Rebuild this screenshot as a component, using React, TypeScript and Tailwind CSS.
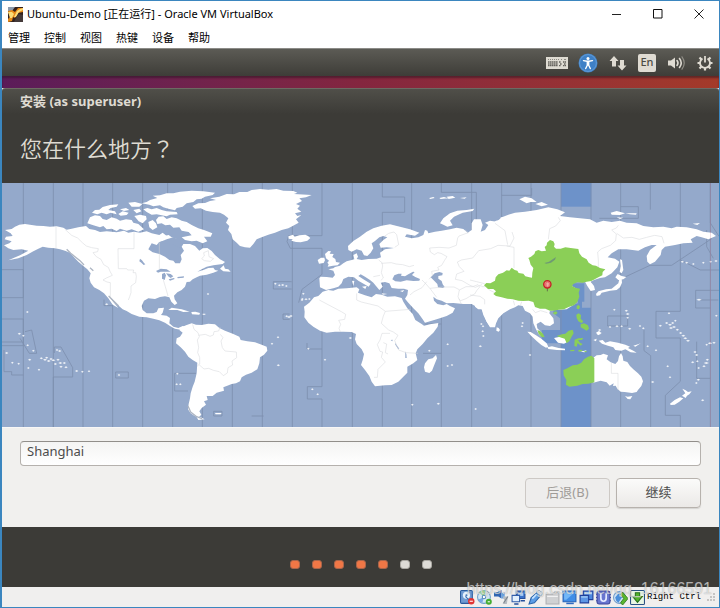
import { useState } from "react";
import type { ReactNode } from "react";

const MENUS = ["管理", "控制", "视图", "热键", "设备", "帮助"];
const STEPS = 7;
const CURRENT_STEP = 5;

// Meridians of the time zones, in map units
const MERIDIANS = [
  70, 160, 249, 338, 428, 607, 697, 787, 877, 1057, 1235, 1415, 1505, 1593,
  1683, 1773, 1862, 2131,
];

// Small islands: x, y, radius
const ISLANDS = [
  [58, 1002, 5], [70, 1008, 4], [83, 1037, 4], [100, 1053, 4], [20, 1060, 5],
  [37, 1089, 4], [56, 1092, 4], [89, 1080, 5], [85, 1105, 4], [117, 1110, 4],
  [124, 1076, 5], [135, 1080, 6], [140, 1074, 5], [146, 1084, 6], [153, 1078, 5],
  [160, 1082, 6], [166, 1093, 5], [174, 1080, 5], [181, 1090, 6], [183, 1101, 5],
  [193, 1090, 5], [198, 1103, 5], [171, 1051, 4], [179, 1054, 5], [230, 1114, 5],
  [247, 1116, 4], [267, 1115, 4], [357, 1126, 4], [320, 914, 5], [82, 937, 4],
  [532, 1122, 4], [530, 1154, 4], [541, 1154, 4], [624, 883, 4], [834, 1013, 4],
  [816, 1032, 4], [835, 1097, 5], [826, 852, 4], [838, 857, 4], [848, 856, 5],
  [859, 859, 4], [906, 901, 4], [907, 898, 4], [918, 899, 5], [928, 898, 4],
  [910, 882, 4], [860, 950, 4], [867, 952, 6], [873, 949, 5], [925, 1047, 4],
  [975, 1080, 4], [937, 1169, 4], [953, 1184, 4], [1051, 1015, 5], [1288, 1053, 4],
  [1343, 1034, 4], [1343, 1099, 4], [1356, 1096, 4], [1237, 1215, 4], [1315, 1212, 5],
  [1427, 1228, 4], [1444, 973, 4], [1449, 980, 4], [1448, 995, 4], [1450, 1009, 4],
  [1441, 1040, 5], [1568, 970, 4], [1566, 980, 4], [1590, 1066, 4], [1843, 930, 4],
  [1879, 933, 5], [1883, 943, 6], [1883, 954, 4], [1799, 991, 5], [1801, 1000, 4],
  [1830, 982, 4], [1851, 980, 5], [1865, 980, 4], [1889, 987, 5], [1920, 979, 4],
  [1930, 986, 4], [1943, 1040, 4], [1958, 1147, 5], [1968, 1052, 4], [1981, 978, 5],
  [2003, 1100, 4], [2010, 1133, 4], [2000, 970, 5], [2010, 975, 6], [2018, 970, 5],
  [2022, 982, 6], [2013, 985, 6], [2032, 990, 5], [2042, 1000, 5], [2050, 1008, 6],
  [2056, 1016, 6], [2064, 1023, 6], [2026, 963, 4], [2007, 941, 4], [2085, 1057, 5],
  [2090, 1066, 5], [2078, 1088, 5], [2092, 1085, 4], [2119, 1090, 8], [2122, 1080, 5],
  [2112, 1100, 5], [2096, 1105, 4], [2095, 1140, 5], [2089, 1150, 4], [2130, 1031, 7],
  [2142, 1029, 5], [2120, 1035, 4], [2108, 1202, 5], [2097, 900, 8], [2047, 786, 5],
  [2060, 789, 5], [2080, 793, 4], [2110, 789, 4], [2132, 786, 4], [2148, 784, 5],
  [2149, 948, 4],
];

function WorldMap() {
  return (
    <svg
      role="img"
      aria-label="时区地图"
      viewBox="6 549 2151 732"
      className="block h-auto w-full bg-[#94a9cb]"
    >
      {/* Selected zone */}
      <path d="M1683 549h91v71h-91z" fill="#6d92c9" />
      <path
        transform="translate(1410 540)"
        d="M305 310H343V365H336V383H363V741H273V490H215V450H270V415L250 400V390L325 370z"
        fill="#6d92c9"
      />

      {/* Zone lines at sea */}
      <g fill="none" stroke="#7d8fae" strokeWidth="2.5">
        {MERIDIANS.map((x) => (
          <path key={x} d={`M${x} 549V1281`} />
        ))}
        <path d="M503 549v80M518 985v296M966 549v158H866l-5 18 10 20h95v78l-60 45-10 40M966 980v180h-44v37h44v84M966 1047h-45v-18" />
        <path d="M1147 549v42h67v46h-67v643M1324 549v28h105v90M1324 950v331M1324 972h-50M1324 1060h-55M70 809H6M70 809v84H6M70 957v80H6M70 957H6M6 1026h60M75 995l20-5 15 70H88l-28-45" />
        <path d="M12 1050v65h23v10h35M160 1281v-150h58v-28l-35-62h-20v18M347 1116h38v18h-38zM524 1120h64M524 1120v53h40M641 1234h25v14h-25zM755 1248h36M820 845h55M820 845v22h55M849 942h20M849 942v16h20M312 899v18h26" />
        <path d="M1505 586h90v-22M1862 620h53v35h-117M1951 549v80M1860 838l90-42 65 0 120-80M2041 780l60 30h56M2131 549v120l26 40M2120 690v50l20 35M2157 871h-70v53h44M2095 900h60M1823 948h60v30h-60zM1968 934h73M1968 934v80h73v130l-45 42v60h45v35M1932 990v62l20 15v214M2090 1025v110h41M2041 549v385" />
      </g>

      {/* Land */}
      <g fill="#fff">
        {/* North America */}
        <path
          transform="translate(0 540)"
          d="M15 150 35 147 45 140 58 134 75 132 95 135 110 137 130 138 150 140 170 139 190 143 200 149 215 146 235 142 258 138 268 147 285 150 300 156 320 154 350 157 372 152 385 158 402 155 420 158 440 154 455 160 478 165 488 158 500 168 512 172 500 180 478 186 470 195 455 190 445 208 458 217 478 222 495 230 508 240 520 242 526 250 540 250 545 238 542 225 552 212 545 200 550 192 570 192 585 198 598 212 608 205 622 204 635 213 645 225 660 238 675 246 668 252 640 256 620 260 605 268 592 275 610 270 625 264 640 263 645 270 655 272 640 278 620 284 600 287 590 292 578 298 570 305 560 306 555 320 545 330 532 337 522 347 524 358 532 370 524 375 514 365 508 352 495 349 480 351 465 357 445 355 432 362 425 378 428 390 440 400 460 400 470 396 475 385 492 383 488 398 483 405 500 407 510 414 508 430 520 440 535 444 548 438 560 442 545 450 525 446 510 438 495 428 478 421 460 416 440 412 418 410 395 402 380 393 368 388 350 372 335 356 325 346 340 366 355 384 338 374 325 355 312 340 298 330 282 322 272 308 268 295 272 280 262 268 250 258 235 245 222 232 210 218 195 212 180 208 165 205 145 203 128 200 112 208 100 214 80 225 55 235 25 241 60 226 85 212 65 208 40 210 25 205 12 196 28 190 35 184 14 178 18 170 38 168 32 160z"
        />
        {/* Arctic archipelago */}
        <path
          transform="translate(0 540)"
          d="M262 130 270 112 285 106 300 108 308 117 320 120 335 112 350 116 360 122 378 118 395 120 400 128 415 132 432 148 415 155 395 148 380 152 360 146 350 153 335 146 320 148 310 138 300 142 280 136zM276 98 285 90 298 89 308 81 330 75 355 73 350 80 332 84 325 90 345 94 350 103 332 98 320 103 305 98 292 103zM355 102 368 94 386 98 380 105 362 107zM385 68 405 66 427 72 418 80 395 80zM360 88 378 84 388 90 372 93zM425 70 440 66 450 60 472 54 458 47 480 46 500 40 520 40 540 35 575 32 610 34 645 38 638 45 615 50 605 56 590 58 580 66 560 70 548 80 530 84 525 91 505 86 490 82 480 76 460 79 448 74zM430 88 442 84 455 88 470 84 485 90 500 94 530 96 533 103 510 104 500 109 470 103 455 104 440 96zM400 90 418 86 424 94 410 100zM403 108 420 104 438 108 440 118 428 130 416 124zM468 120 476 110 490 109 500 117 515 112 530 115 545 122 560 126 575 135 595 145 612 150 637 160 632 170 612 170 622 184 608 190 590 182 575 184 555 180 545 172 575 166 566 156 545 152 538 142 520 143 510 134 496 136 485 130 472 132zM445 126 458 120 468 130 472 142 458 150 448 142zM484 176 492 168 506 165 515 172 532 178 530 186 512 184 498 188zM505 390 515 383 545 388 569 395 550 396 532 390zM574 396 586 395 600 399 598 404 576 403zM608 401h8v3h-8zM660 266 671 256 675 266 685 268 692 275 670 274z"
        />
        {/* Greenland */}
        <path
          transform="translate(480 540)"
          d="M97 78 115 70 135 69 150 63 168 60 150 55 178 50 200 42 222 43 238 36 262 36 275 30 300 27 325 29 350 27 370 32 400 33 412 38 402 42 455 45 438 52 418 55 426 63 408 72 420 77 412 86 424 95 405 100 412 108 424 105 408 118 416 128 398 138 385 145 365 150 345 158 325 164 305 172 290 178 280 192 270 203 255 202 240 198 230 188 218 178 214 162 204 150 208 138 198 128 205 115 192 104 180 98 158 96 138 92 122 85 105 86z"
        />
        <path transform="translate(480 540)" d="M385 169l14-5 5 6 14-4 18-2 8 4 7 6-9 8-20 5-14-1-14-4 4-4-12-2z" />
        {/* South America */}
        <path
          transform="translate(480 540)"
          d="M58 450 68 440 78 436 95 430 108 434 125 435 145 431 165 433 178 444 195 452 220 462 238 470 242 480 262 484 285 487 305 494 320 500 322 512 312 524 300 532 298 550 292 568 275 578 258 584 245 592 240 604 228 610 215 612 200 618 190 622 192 632 170 638 158 648 140 648 143 660 132 664 138 674 125 684 118 694 124 704 116 712 104 708 92 700 84 688 86 672 90 655 92 640 98 620 104 605 110 580 112 548 98 540 85 530 75 515 62 502 48 490 50 475 60 470 68 458z"
        />
        <path transform="translate(480 540)" d="M108 708 122 712 134 718 115 720zM165 699h20l-3 4h-15z" />
        {/* British Isles */}
        <path transform="translate(870 540)" d="M105 222l10-9 8 1-4 7 12 1-4 9 9 6 2 9 12 2-7 8-14 1-16 3 3-7-4-5 5-6-9-7-1-5zM83 240l10-7 10 0 2 8-4 8-14 2z" />
        {/* Europe, the Middle East and India */}
        <path
          transform="translate(870 540)"
          d="M88 295 92 290 110 291 128 293 135 285 130 272 115 268 130 265 135 261 150 257 160 250 170 244 185 240 193 238 190 225 200 220 204 230 200 237 215 240 235 237 260 236 273 232 270 218 285 208 312 204 290 202 272 203 268 192 280 180 292 172 280 168 268 172 255 183 245 190 250 205 242 218 232 228 222 226 215 212 200 208 185 215 175 210 174 198 190 183 210 170 230 155 250 145 275 137 300 133 330 140 360 148 388 158 375 167 350 163 345 170 365 175 385 172 400 165 405 150 412 152 415 160 435 155 455 152 480 148 500 143 520 147 533 158 545 150 545 130 552 118 572 118 578 135 572 155 585 150 595 135 585 128 600 122 620 125 635 112 660 110 660 385 640 398 622 412 618 428 610 440 600 442 590 425 580 405 575 388 562 385 555 378 545 372 520 372 490 369 470 370 455 362 440 358 430 350 432 362 442 372 460 376 470 372 480 378 495 385 488 398 470 408 440 418 405 428 398 418 385 400 370 385 355 368 345 356 352 345 354 330 342 326 325 326 305 324 298 310 285 306 272 308 278 320 268 330 258 318 250 308 240 300 225 290 212 283 205 288 220 298 242 311 236 320 222 312 205 302 192 292 175 290 160 297 155 310 145 320 130 325 108 330 90 322zM216 320 230 318 226 327zM186 302 193 303 190 318zM275 340 292 342 278 344zM330 333 343 330 338 336z"
        />
        <path d="M1320 670 1330 655 1350 640 1372 632 1400 630 1423 626 1418 633 1388 638 1362 650 1350 662 1358 676 1342 680 1330 674zM1288 594l12-3 4 3-14 3zM1318 594l14-3 12 4-22 2zM1340 590l18-2 8 5-20 4zM1380 594l20-2-6 4z" />
        {/* Siberia and the Far East */}
        <path
          transform="translate(1410 540)"
          d="M60 135 78 122 100 118 90 114 115 104 135 98 165 95 200 90 235 82 262 88 285 97 270 108 300 112 330 115 360 118 380 128 400 122 425 126 450 122 470 128 500 130 520 138 550 142 580 140 605 145 620 140 650 142 680 148 700 155 725 158 738 168 715 178 695 172 680 168 662 178 668 188 640 190 615 195 585 200 575 210 572 225 555 245 540 253 532 245 530 228 540 210 560 195 545 195 525 202 505 212 470 208 445 208 425 220 413 232 435 236 448 245 442 262 425 280 405 292 390 294 372 300 362 305 372 318 375 330 362 333 352 318 345 305 325 303 308 310 305 318 322 328 325 350 315 372 290 388 255 390 240 392 238 400 250 415 252 430 240 438 225 436 212 425 200 432 202 445 215 458 220 470 208 465 198 448 190 430 188 410 180 400 165 392 158 378 145 376 135 382 120 388 100 400 85 415 78 430 75 442 62 442 50 425 42 405 36 388 25 388 15 380 20 200z"
        />
        <path
          transform="translate(1410 540)"
          d="M148 58 165 50 185 55 200 66 182 66 170 70zM196 72 215 66 234 74 215 79zM422 98 440 93 465 100 450 105 425 104zM466 100 500 100 498 104 480 103zM440 112 460 113 450 117zM668 131 690 129 682 135zM80 442l6 2 4 6-4 5-7-3z"
        />
        {/* Africa */}
        <path
          transform="translate(870 540)"
          d="M98 335 115 330 130 332 145 326 170 325 200 322 208 328 204 338 225 346 245 352 258 342 275 344 292 350 315 349 335 354 340 365 352 385 368 402 376 420 395 432 402 437 420 433 445 429 443 440 430 458 412 475 398 492 382 508 377 520 382 540 370 550 352 560 352 578 340 590 325 605 305 615 285 616 255 619 245 605 238 588 225 570 213 555 218 540 222 522 215 508 200 492 195 478 198 462 185 456 160 455 135 455 110 458 90 452 70 440 55 428 43 412 44 395 42 380 58 368 72 352 85 348z"
        />
        <path transform="translate(870 540)" d="M402 562 405 550 415 538 428 535 438 525 441 535 434 552 426 572 418 579 405 575z" />
        {/* Japan and Sakhalin */}
        <path
          transform="translate(1410 540)"
          d="M378 342 385 334 408 328 425 326 435 318 445 310 448 298 455 296 456 308 450 322 440 330 420 332 405 336 395 338 390 346 380 348zM436 292 443 282 455 288 469 291 460 298 445 300zM450 238 456 240 458 255 460 270 455 280 449 276 452 258z"
        />
        {/* Indonesia and New Guinea */}
        <path
          transform="translate(1410 540)"
          d="M172 455 182 456 198 466 214 476 230 490 235 500 228 503 214 495 200 483 184 468zM232 502 246 499 266 504 285 506 285 511 261 510 235 507zM252 474 270 470 285 474 292 486 282 491 264 488zM386 482 398 480 406 488 420 484 444 488 466 494 480 500 474 504 490 512 500 518 482 517 466 508 454 512 436 510 430 502 414 497 396 491zM330 515 350 511 344 517zM490 497 504 493 512 490 496 500zM378 458 388 452 392 462 384 466zM370 480 380 476 378 484z"
        />
        {/* Australia and New Zealand */}
        <path
          transform="translate(1410 540)"
          d="M370 533 380 526 392 525 400 521 414 526 410 538 422 547 436 552 444 543 447 529 453 519 458 529 460 542 472 546 480 558 490 568 504 580 514 590 519 604 514 618 504 630 500 636 486 639 464 636 452 635 442 626 437 617 429 618 431 610 419 617 410 607 392 602 370 608zM465 648 473 650 487 648 481 658 473 657zM600 671 614 660 630 652 640 655 628 665 614 674 602 675zM636 647 646 640 637 626 647 631 654 636 665 634 658 643 651 647 647 654z"
        />
        {ISLANDS.map(([x, y, r]) => (
          <path
            key={`${x}-${y}`}
            d={`M${x - r} ${y - 1}l${r} -3 ${r} 3-${r} 3z`}
            opacity="0.85"
          />
        ))}
      </g>

      {/* Inland seas and lakes */}
      <g fill="#94a9cb">
        <path transform="translate(870 540)" d="M307 298l6-12 12-5 10 0-2 6 12 2 10-6 14-8 5 1-8 9 10 6 14 6-2 5-18 1-20-2-18 4-16-1zM422 292l12-12 14-4 10 3-1 7-12 2 0 8 10 7 3 10 6 8-6 3-14-2-2-10-8-8z" />
        <path transform="translate(0 540)" d="M468 273l14-7 18 2 12 7-14 0-16 0-8 3zM486 282l8-4 4 8-4 14-8-4zM498 280l14 2 8 7-8 5-6-4zM506 298l16-4 2 3-14 5zM532 291l20-2-1 4-18 2zM420 236l6 5 6 8 4 4-5 2-7-7-6-4zM475 188 500 178 520 172 540 180 548 190 540 205 520 195 495 190z" />
        <path transform="translate(870 540)" d="M316 488l4 8 8 10-4 0-8-12zM346 514l3 8 1 12-4 0zM302 480l6-1-1 5z" />
      </g>
      <path
        d="M200 748 212 760 225 770 240 782 252 795M270 803 280 812M326 888 340 902 356 918M564 1218 572 1236 590 1250 606 1256"
        fill="none"
        stroke="#aeb6c3"
        strokeWidth="4"
      />

      {/* Zone borders on land */}
      <g fill="none" stroke="#d3d4d8" strokeWidth="1.5" strokeLinejoin="round">
        <path transform="translate(0 540)" d="M168 140v66M195 148l20 18 18 8 14 14 12 10 16 5 20 3-2 9-14 3 10 12 14 8 8 16 14 8 6 14 6 10-18 8-10 6 12 6 10 2v44M402 157v49h-48l1 60 25 0 3 4h18l-2 8 8 0 2 12-2 18-14 10 0 20-4 12-4 10M478 187v80M490 300l6 20 8 28M605 236l8-8-2-10 14-6 2 18 14 6-10 8-18-2z" />
        <path transform="translate(480 540)" d="M98 433l4 15 12 10 4 12-6 10 4 22-3 16 6 14 0 20-7 6M116 466l20-3 14 6 10-4 2-10 14-2 4-12M116 553l16 14 14-2 14 6 18 4 12 12 12-8 2-16 14-8-2-12 14-10-1-17-34-3-8-10-4-20 6-10-8-10" />
        <path transform="translate(870 540)" d="M88 360l66 35 13 8-3 15-18 3 6 12-5 12 4 10M200 340v20l14 6 50 12 22 16 76-6M286 394l-6 14-6 22 22 20 14 6 14 10-10 16 12 28 22 8 36 2M300 460l-24 0-6 20-8 14 8 20 8 2-4 16 12 14-22 22-2 24-10 0M280 488l10 4-4 26 8 4M274 250l30-2 14 4 20 2 20 6 14-4M282 170l14-10 16-4 8 8 6 30-12 8M266 240l10 8 2 10-4 20 6 16-8 8M250 290l20-4M360 345l12-10 24-12 14-18M396 300l12 12 14 16 18 24M420 325l28-3 14-1 30 0 16 8M508 330l-4 20 10 22M508 330l20-10 20 0 16-6 6 6-10 12-6 10-16 8-10 6-16 6-6-6M574 320l16 0 8 10 20 10M525 150l10 8-28 10-4 6-4 22-22 8-30-2-28 2 2 12 12 8 10-6 10 2 18 10-8 12-8 14-12 6 4 8-22 4 2 12-10 12M502 246l12-6 34-6 18-22 36-6 22-10 36 2 12-24-6-18M502 246l6 14 14 14-22 8-4 16 20 4 24 14 16 6 20-8" />
        <path transform="translate(1410 540)" d="M75 130l30 22 4 22 4 20M110 198l22 4 0 22 0 40M235 178l4-32 18-8 14-16-6-10M385 290l0-50-2-24 12-10 26-10 16-14 2-20-14-12 14-6 6-8M440 160l20 14 26-2 22 6 22-6 24-6 22 4 6 20M155 365l-4 12M130 362l4 14M0 345l30 4 14 10 0 14M424 548l0 32 20 0v50M188 388l8 10 16-6 20 6M0 300l20 5 24 6" />
      </g>

      {/* Land in the selected zone */}
      <g transform="translate(1410 540)" fill="#8bcf57">
        <path d="M42 316 49 309 61 310 75 302 77 292 85 283 99 278 110 271 118 272 125 263 134 270 142 272 146 279 160 281 166 289 178 292 186 293 187 278 190 264 182 254 178 240 175 234 183 230 193 222 196 214 205 210 215 214 228 212 224 201 230 196 231 188 240 180 250 184 254 192 252 200 258 206 272 206 286 202 302 204 325 207 328 220 336 230 350 238 356 248 368 256 378 257 390 264 406 268 398 276 397 286 385 292 374 298 364 303 350 305 338 308 322 307 310 312 306 318 318 324 330 326 326 338 328 350 322 366 312 376 296 381 282 388 266 389 252 392 240 392 226 386 210 386 195 381 190 366 176 362 160 363 145 362 128 358 112 356 95 352 78 348 70 342 78 334 70 327 54 327z" />
        <path d="M280 570 292 565 308 556 322 554 334 548 342 538 354 530 364 527 373 534 373 607 355 611 338 612 322 617 298 620 288 614 289 600 281 586zM260 468 276 463 286 461 296 452 308 449 311 460 304 472 298 484 290 490 284 476 270 472zM202 450 211 454 219 461 224 472 215 471 206 462zM320 378 326 375 330 380 327 388 320 386zM250 397 258 394 263 399 256 404 250 401zM319 404 326 400 333 405 332 416 340 424 335 430 325 424 320 414zM332 433 342 430 354 436 357 446 350 452 340 446 332 442zM314 479 325 475 340 474 336 480 324 480 330 488 338 492 332 497 323 489 320 500 313 498zM300 511 312 509 314 513 301 514zM325 510 337 509 336 514 326 515zM340 513 352 514 347 517z" />
        <path d="M223 249l14-4 12-8 9-6-3 8-12 9-14 3z" fill="#6f9a73" />
        {/* Pin on the chosen city */}
        <path d="M232 322v12" stroke="#67704e" strokeWidth="3" />
        <circle cx="232" cy="313" r="11" fill="#ef7d7c" stroke="#c32226" strokeWidth="4" />
        <path d="M229 321l-1-11 3-4 4 0 3 5-2 10z" fill="#f4aaa3" stroke="#d84b4c" strokeWidth="1.5" />
      </g>
      <path d="M2131 549V1281" stroke="#b96d86" strokeWidth="2" opacity="0.45" />
    </svg>
  );
}

function VirtualBoxLogo() {
  return (
    <svg viewBox="0 0 15 15" className="size-[15px]" aria-hidden="true">
      <rect width="15" height="15" fill="#33221d" />
      <path d="M0 0h7L4 4H0z" fill="#8b9bad" />
      <path d="M0 4l4-1 3 2 3-4h5v4l-5 1-3 5-2-1-1 4-4 1v-3l2-2z" fill="#e68a18" />
      <path d="M0 5h4l2 2-2 4H2zM9 4l3-2 3-1v2l-4 2-3 5H6z" fill="#fbdc78" />
      <path d="M9 9l2-2 4 1v7H6z" fill="#443a3a" />
    </svg>
  );
}

function TrayIcons() {
  return (
    <div className="flex h-[27px] items-center justify-end gap-[10px] pr-[5px]">
      <svg viewBox="0 0 22 12" className="h-[12px] w-[22px]" aria-label="键盘">
        <path d="M0 0h22v12H0z" fill="#dedbd2" />
        <path d="M2 2.500h1M4 2.500h1M6 2.500h1M8 2.500h1M10 2.500h1M12 2.500h1M15 2.500h1M18 2.500h2" stroke="#8c8a83" />
        <path d="M2 5h10M13 5h2M17 5h3M2 7h10M14 7h2M18 7h2M2 8.700h10M13 8.700h2M17 8.700h3" stroke="#66645e" strokeWidth="1.300" strokeDasharray="1.500 .4" />
      </svg>
      <svg viewBox="0 0 20 20" className="size-[20px]" aria-label="辅助功能">
        <circle cx="10" cy="10" r="9.500" fill="#3e80c6" />
        <circle cx="10" cy="10" r="8.400" fill="none" stroke="#69a2dc" strokeWidth=".8" />
        <circle cx="10" cy="5.500" r="1.500" fill="#fff" />
        <path d="M5.500 7.600l3.500.7h2l3.500-.7M10 8v4M9.300 8.500v3.700L7.700 15.500M10.700 8.500v3.700l1.600 3.300" fill="none" stroke="#fff" strokeWidth="1.400" strokeLinecap="round" />
      </svg>
      <svg viewBox="0 0 20 18" className="h-[18px] w-[20px]" aria-label="网络">
        <path d="M6 2L1.500 7H4v5.500h4V7h2.500zM14 16.500l4.500-5H16V6h-4v5.500H9.500z" fill="#dfdbd2" />
      </svg>
      <span className="flex size-[18px] items-center justify-center rounded-[2px] bg-[#dfdbd2] text-[11px] font-medium text-[#4b4a44]">
        En
      </span>
      <svg viewBox="0 0 20 18" className="h-[18px] w-[20px]" aria-label="音量">
        <path d="M2 6.500h3L9 3.500v11L5 11.500H2z" fill="#dfdbd2" />
        <g fill="none" strokeLinecap="round" strokeWidth="1.600">
          <path d="M11 6.500q2 2.500 0 5" stroke="#dfdbd2" />
          <path d="M13.500 4.500q3.500 4.500 0 9" stroke="#dfdbd2" />
          <path d="M16 2.800q4.500 6.200 0 12.400" stroke="#8e8c84" strokeWidth="1.200" />
        </g>
      </svg>
      <svg viewBox="0 0 18 18" className="size-[18px]" aria-label="系统">
        <g fill="none" stroke="#dfdbd2">
          <path d="M6.500 4.600a5 5 0 1 0 5 0" strokeWidth="1.800" />
          <path d="M9 2v6.500" strokeWidth="1.800" />
          <path d="M3.500 3.500l2 2M14.500 3.500l-2 2M1.500 9h2.500M14 9h2.500M3.500 14.500l2-2M14.500 14.500l-2-2M9 14v2.500" strokeWidth="2.200" />
        </g>
      </svg>
    </div>
  );
}

function StatusIcon({ label, children }: { label: string; children: ReactNode }) {
  return (
    <svg viewBox="0 0 14 14" className="size-[15px]" aria-label={label}>
      {children}
    </svg>
  );
}

function StatusBar() {
  return (
    <footer className="flex h-[20px] items-center justify-end gap-[2px] bg-[#f0efee] pr-[2px]">
      <StatusIcon label="硬盘">
        <rect x=".5" y=".5" width="11" height="12" rx="1" fill="#6f9bd2" stroke="#2a5b9d" />
        <circle cx="6" cy="5" r="3.300" fill="#e7f1fb" />
        <path d="M5 6l3 3" stroke="#356cb2" />
        <circle cx="6" cy="5" r="1" fill="#4679b6" />
        <circle cx="10.500" cy="10.500" r="3" fill="#e13535" />
        <path d="M9 10.500h3" stroke="#fff" />
      </StatusIcon>
      <StatusIcon label="光盘">
        <circle cx="6.500" cy="6.500" r="6" fill="#d1e6f5" stroke="#6ea0c8" />
        <path d="M6.500 6.500L2 2a6 6 0 0 1 6-1.300z" fill="#9ed594" />
        <path d="M6.500 6.500L1 9a6 6 0 0 0 4 3z" fill="#79a9e4" />
        <circle cx="6.500" cy="6.500" r="1.600" fill="#fff" stroke="#568bb9" />
        <circle cx="11" cy="11" r="2.800" fill="#45ad32" />
        <path d="M10 11h2" stroke="#fff" />
      </StatusIcon>
      <StatusIcon label="音频">
        <path d="M0 2h3l4-2v8L4 6H0z" fill="#2f65b3" />
        <path d="M7 3l3-1v6H7z" fill="#6aa2df" />
        <path d="M8 6h5l-1 7H8l2-3z" fill="#b6bbc1" />
        <path d="M9 12l4-6" stroke="#7c858e" />
      </StatusIcon>
      <StatusIcon label="网络">
        <path d="M5 1h8v7H5z" fill="#3971ca" stroke="#244f9c" />
        <path d="M6.500 2.500h5v3h-5z" fill="#a8cdf4" />
        <path d="M1 5h7v6H1z" fill="#e2effc" stroke="#315daa" />
        <path d="M3 13h4M9 10h4" stroke="#244f9c" strokeWidth="1.500" />
      </StatusIcon>
      <StatusIcon label="USB">
        <path d="M1 13l2-6 6-5 3 3-6 7z" fill="#5c9de6" stroke="#2a65ab" />
        <path d="M8 2l2-2 4 3-2 3z" fill="#d8e5ef" stroke="#8196aa" strokeWidth=".7" />
        <path d="M4 8l4-4" stroke="#cce6ff" strokeWidth="1.500" />
      </StatusIcon>
      <StatusIcon label="共享文件夹">
        <path d="M1 4h6l2-2h4v11H1z" fill="#d0d1d3" stroke="#aeb0b3" />
        <path d="M2 6h10" stroke="#f3f3f3" />
      </StatusIcon>
      <StatusIcon label="显示">
        <path d="M1 1h12v10H1z" fill="#408de6" stroke="#2764b9" />
        <path d="M2 2h10L4 9H2z" fill="#73b7f8" />
        <path d="M4 12.500h7" stroke="#316abf" strokeWidth="1.500" />
      </StatusIcon>
      <StatusIcon label="录像">
        <path d="M4 1h9v8H4z" fill="#4e88e0" stroke="#203f99" />
        <path d="M5 2h7v2H5z" fill="#bbddfa" />
        <path d="M1 5h8v7H1z" fill="#5c96e5" stroke="#203f99" />
        <path d="M2 6h6v1H2z" fill="#b8d9f8" />
      </StatusIcon>
      <StatusIcon label="虚拟化">
        <rect x="1" y="1" width="12" height="12" rx="2" fill="#6875cf" stroke="#3e489e" />
        <path d="M4.500 3v4.500q0 3 2.500 3t2.500-3V3" fill="none" stroke="#e4eaff" strokeWidth="1.600" />
        <path d="M0 4h1M0 7h1M0 10h1M13 4h1M13 7h1M13 10h1" stroke="#3e489e" />
      </StatusIcon>
      <StatusIcon label="鼠标集成">
        <circle cx="6" cy="7" r="5.500" fill="#cfe3f4" stroke="#729dcb" />
        <path d="M2 7l4-5v4h3l-4 6-2-2z" fill="#4a8fda" />
        <path d="M7 4l2-2 5 6-5 6-2-2 3-4z" fill="#5ab72f" stroke="#327b25" strokeWidth=".8" />
      </StatusIcon>
      <StatusIcon label="键盘捕获">
        <rect x=".5" y=".5" width="13" height="13" rx="1" fill="#e8f6e4" stroke="#2a5184" />
        <path d="M5 2.500h4V6h2.500L7 11.500 2.500 6H5z" fill="#52b42b" stroke="#27721e" />
      </StatusIcon>
      <span className="font-['Liberation_Mono',monospace] text-[9px] leading-[10px] text-black">
        Right Ctrl
      </span>
      <svg viewBox="0 0 14 14" className="size-[14px]" aria-hidden="true">
        <path d="M10 3h2v2h-2zM7 6h2v2H7zM10 6h2v2h-2zM4 9h2v2H4zM7 9h2v2H7zM10 9h2v2h-2z" fill="#c5c4c3" />
      </svg>
    </footer>
  );
}

export default function App() {
  const [city, setCity] = useState("Shanghai");

  return (
    <div className="relative border border-l-2 border-[#3b86bf] bg-[#f1f0ee] font-['Noto_Sans','Noto_Sans_CJK_SC',sans-serif]">
      {/* Host window */}
      <header className="bg-white">
        <div className="flex h-[26px] items-center gap-[4px] pl-[6px]">
          <VirtualBoxLogo />
          <span className="flex-1 text-[11px] text-black">
            Ubuntu-Demo [正在运行] - Oracle VM VirtualBox
          </span>
          <div className="flex items-center gap-[10px] pr-[5px]">
            <button type="button" aria-label="最小化" className="flex w-[31px] justify-center">
              <svg viewBox="0 0 10 10" className="size-[10px]">
                <path d="M0 5.500h9" stroke="#222" />
              </svg>
            </button>
            <button type="button" aria-label="最大化" className="flex w-[31px] justify-center">
              <svg viewBox="0 0 10 10" className="size-[10px]">
                <path d="M.5.500h8.500v8.500H.5z" fill="none" stroke="#111" />
              </svg>
            </button>
            <button type="button" aria-label="关闭" className="flex w-[31px] justify-center">
              <svg viewBox="0 0 10 10" className="size-[10px]">
                <path d="M.5.500l9 9M9.500.500l-9 9" stroke="#222" />
              </svg>
            </button>
          </div>
        </div>
        <nav className="flex h-[21px] items-center gap-[14px] pl-[6px] text-[11px] leading-[16px] text-black">
          {MENUS.map((menu) => (
            <button key={menu} type="button">
              {menu}
            </button>
          ))}
        </nav>
      </header>

      {/* Ubuntu panel and the strip of wallpaper under it */}
      <div className="border-t border-[#8c8b87] bg-linear-to-b from-[#5c5b55] to-[#3e3d38]">
        <TrayIcons />
      </div>
      <div className="h-[12px] bg-linear-to-r from-[#5b1b59] via-[#84263f] to-[#a43a29] shadow-[inset_0_2px_2px_rgba(40,20,30,0.5)]" />

      <main>
        <div className="h-[26px] rounded-t-[3px] border-t border-[#6d6a63] bg-linear-to-b from-[#504f49] to-[#3c3b37] px-[18px] text-[13px] leading-[24px] font-bold text-[#dfdbd2]">
          安装 (as superuser)
        </div>
        <h1 className="bg-[#3c3b37] px-[18px] pt-[17px] pb-[20px] font-['Noto_Sans_CJK_SC',sans-serif] text-[22px] leading-[32px] font-[350] text-[#dfdbd2]">
          <label htmlFor="city" lang="zh-CN">
            您在什么地方
            <span lang="zh-TW" className="font-['Noto_Sans_CJK_TC',sans-serif]">
              ？
            </span>
          </label>
        </h1>

        <WorldMap />

        <form
          className="border-t border-[#f8f7f6] px-[18px] pt-[13px] pb-[19px]"
          onSubmit={(e) => e.preventDefault()}
        >
          <input
            id="city"
            value={city}
            onChange={(e) => setCity(e.target.value)}
            className="block h-[25px] w-full rounded-[4px] border border-[#b5b1ad] border-t-[#918e8a] bg-linear-to-b from-[#f4f4f3] to-white px-[6px] pb-[6px] text-[13px] leading-[18px] text-[#4c4c4c] outline-none"
          />
          <div className="mt-[12px] flex justify-end gap-[6px]">
            <button
              type="button"
              disabled
              className="h-[30px] w-[85px] rounded-[4px] border border-[#cdc9c5] bg-[#eeedec] text-[13px] text-[#a09c98]"
            >
              后退(B)
            </button>
            <button
              type="submit"
              className="h-[30px] w-[85px] rounded-[4px] border border-[#b7b2ad] bg-linear-to-b from-[#fbfbfa] to-[#ebe9e7] text-[13px] text-[#4c4c4c] shadow-[0_1px_1px_rgba(0,0,0,0.12)]"
            >
              继续
            </button>
          </div>
        </form>

        <ol className="flex h-[60px] justify-center gap-[12px] bg-[#3c3b37] pt-[33px]">
          {Array.from({ length: STEPS }, (_, i) => (
            <li
              key={i}
              className={
                i < CURRENT_STEP
                  ? "h-[9px] w-[10px] rounded-[3px] border border-[#a9654b] bg-[#f07746]"
                  : "h-[9px] w-[10px] rounded-[3px] border border-[#aaa8a2] bg-[#dddbd6]"
              }
            />
          ))}
        </ol>
      </main>

      <StatusBar />

      <p className="pointer-events-none absolute right-[7px] bottom-[9px] text-right font-['Liberation_Sans',sans-serif] text-[16px] leading-[18px] text-white/60 [text-shadow:0_0_1px_rgba(80,80,80,0.5)]">
        https://blog.csdn.net/qq_16166591
      </p>
    </div>
  );
}
